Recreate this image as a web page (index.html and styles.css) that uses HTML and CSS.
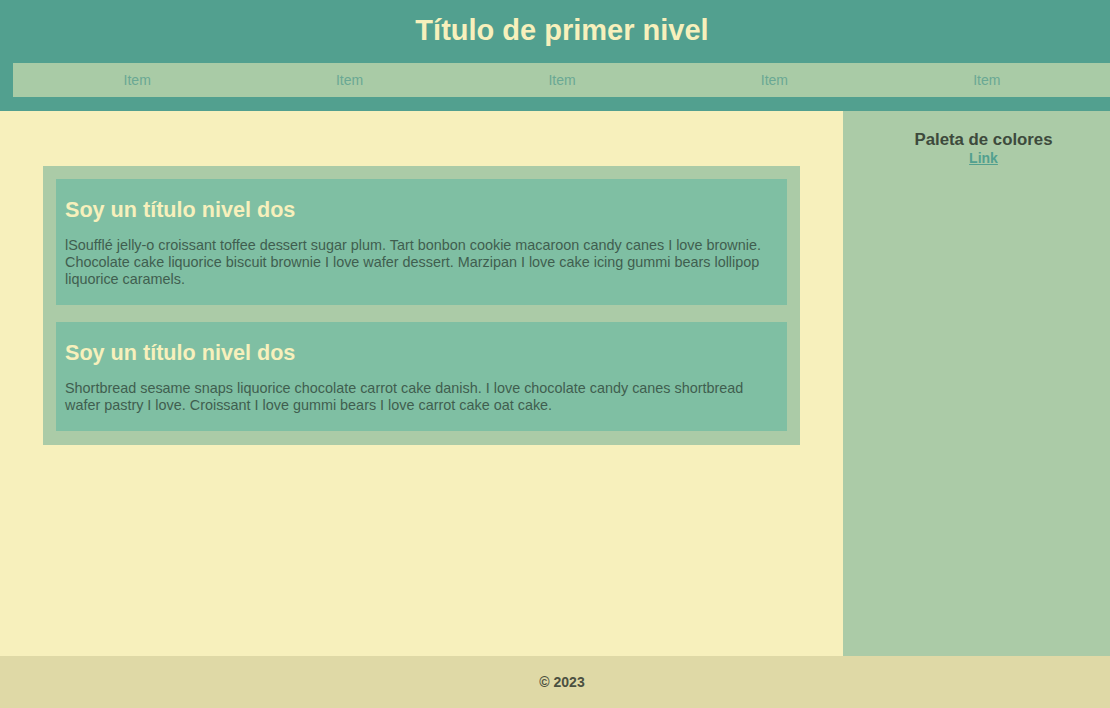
FILE: index.html
```html
<!DOCTYPE html>
<html lang="es">
<head>
<meta charset="utf-8">
<title>Paleta</title>
<link rel="stylesheet" href="styles.css">
</head>
<body>
<div class="page">
  <header class="header">
    <h1 class="title">Título de primer nivel</h1>
    <nav class="nav">
      <a class="nav-item" href="#">Item</a>
      <a class="nav-item" href="#">Item</a>
      <a class="nav-item" href="#">Item</a>
      <a class="nav-item" href="#">Item</a>
      <a class="nav-item" href="#">Item</a>
    </nav>
  </header>
  <div class="main">
    <section class="content">
      <div class="box">
        <article class="card">
          <h2 class="card-title">Soy un título nivel dos</h2>
          <p class="card-text">lSoufflé jelly-o croissant toffee dessert sugar plum. Tart bonbon cookie macaroon candy canes I love brownie. Chocolate cake liquorice biscuit brownie I love wafer dessert. Marzipan I love cake icing gummi bears lollipop liquorice caramels.</p>
        </article>
        <article class="card">
          <h2 class="card-title">Soy un título nivel dos</h2>
          <p class="card-text">Shortbread sesame snaps liquorice chocolate carrot cake danish. I love chocolate candy canes shortbread wafer pastry I love. Croissant I love gummi bears I love carrot cake oat cake.</p>
        </article>
      </div>
    </section>
    <aside class="sidebar">
      <h3 class="side-title">Paleta de colores</h3>
      <a class="side-link" href="#">Link</a>
    </aside>
  </div>
  <footer class="footer">© 2023</footer>
</div>
</body>
</html>
```

FILE: styles.css
```css
html, body {
  margin: 0;
  padding: 0;
  overflow: hidden;
}
body {
  font-family: "Liberation Sans", Arial, sans-serif;
  background: #f7f0bc;
}
.page {
  width: 1124px;
  height: 708px;
  display: flex;
  flex-direction: column;
}
.header {
  background: #52a08f;
  padding: 0 13px 14px;
}
.title {
  margin: 0;
  height: 63px;
  line-height: 61px;
  text-align: center;
  color: #f7f0bc;
  font-size: 29px;
  font-weight: bold;
}
.nav {
  background: #a9cba6;
  height: 34px;
  padding: 0 18px;
  display: grid;
  grid-template-columns: repeat(5, 1fr);
  align-items: center;
}
.nav-item {
  text-align: center;
  color: #6aa894;
  text-decoration: none;
  font-size: 14px;
}
.main {
  flex: 1;
  display: flex;
}
.content {
  width: 843px;
  background: #f7f0bc;
  padding: 55px 43px 0;
  box-sizing: border-box;
}
.box {
  background: #abcba7;
  padding: 13px 13px 14px;
  display: flex;
  flex-direction: column;
  gap: 17px;
}
.card {
  background: #7fbfa3;
  padding: 19px 9px 17px;
}
.card-title {
  margin: 0 0 15px;
  color: #f7f0bc;
  font-size: 21.6px;
  line-height: 24px;
  font-weight: bold;
}
.card-text {
  margin: 0;
  color: #3f5e4f;
  font-size: 14.4px;
  line-height: 17px;
}
.sidebar {
  flex: 1;
  background: #abcba7;
  text-align: center;
  padding-top: 19px;
}
.side-title {
  margin: 0;
  color: #3d4a3c;
  font-size: 16.8px;
  line-height: 19px;
  font-weight: bold;
}
.side-link {
  display: inline-block;
  margin-top: -1px;
  color: #52a08f;
  font-weight: bold;
  font-size: 14px;
  line-height: 15px;
}
.footer {
  height: 52px;
  background: #dfd9a6;
  color: #4b5040;
  font-weight: bold;
  font-size: 14px;
  line-height: 52px;
  text-align: center;
}
```
